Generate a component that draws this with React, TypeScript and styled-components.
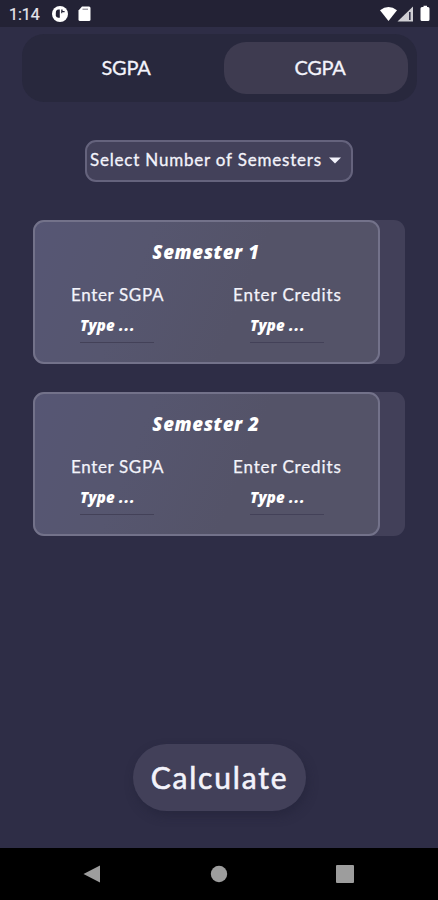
import React from "react";
import styled, { createGlobalStyle } from "styled-components";

const GlobalStyle = createGlobalStyle`
  * { box-sizing: border-box; }
  body { margin: 0; background: #2e2d46; }
`;

const Screen = styled.div`
  width: 438px;
  height: 900px;
  display: flex;
  flex-direction: column;
  overflow: hidden;
  background: #2e2d46;
  color: #f3f3fb;
  font-family: Lato, "Open Sans", sans-serif;
`;

const StatusBar = styled.header`
  height: 27px;
  flex: none;
  display: flex;
  align-items: center;
  justify-content: space-between;
  padding: 1px 7px 0 9px;
  background: #232235;
`;

const StatusGroup = styled.div`
  display: flex;
  align-items: center;
  height: 27px;
`;

const Clock = styled.time`
  width: 42px;
  font: 400 16px/27px Roboto, sans-serif;
  color: #e6e6ec;
  -webkit-text-stroke: 0.2px;
`;

const Main = styled.main`
  flex: 1;
  display: flex;
  flex-direction: column;
  align-items: center;
`;

const Tabs = styled.nav`
  width: 395px;
  height: 68px;
  margin: 7px 0 0 1px;
  padding: 8px 9px;
  display: flex;
  justify-content: space-between;
  border-radius: 22px;
  background: #28283d;
`;

const Tab = styled.button<{ $active?: boolean }>`
  width: 184px;
  height: 52px;
  padding: 0 0 2px ${(p) => (p.$active ? 8 : 6)}px;
  border: 0;
  border-radius: 22px;
  background: ${(p) => (p.$active ? "#3e3b50" : "transparent")};
  color: inherit;
  font: 400 20px/24px Lato, sans-serif;
  letter-spacing: -0.25px;
  -webkit-text-stroke: 0.3px;
`;

const Select = styled.button`
  width: 268px;
  height: 42px;
  margin: 38px 0 0;
  padding: 0 10px 3px 3px;
  display: flex;
  align-items: center;
  justify-content: space-between;
  border: 2px solid #65637d;
  border-radius: 11px;
  background: #43415a;
  color: inherit;
  font: 400 17px/22px Lato, sans-serif;
  letter-spacing: 0.8px;
  -webkit-text-stroke: 0.3px;
  white-space: nowrap;

  svg { margin-top: 2px; }
`;

const SemesterList = styled.section`
  margin-top: 38px;
  display: flex;
  flex-direction: column;
  gap: 28px;
`;

const CardBack = styled.div`
  width: 372px;
  height: 144px;
  border-radius: 11px;
  background: #424059;
`;

const Card = styled.article`
  width: 347px;
  height: 144px;
  padding-top: 17px;
  border: 2px solid #73728a;
  border-radius: 11px;
  background: linear-gradient(112deg, #565674 0%, #56566f 30%, #545368 60%);
`;

const CardTitle = styled.h2`
  height: 26px;
  margin: 0;
  padding-right: 1px;
  color: #fff;
  text-align: center;
  font: italic 800 18.5px/25px "Open Sans", sans-serif;
  letter-spacing: 0.65px;
`;

const Fields = styled.div`
  display: flex;
  margin-top: 18px;
  padding-left: 36px;
`;

const Field = styled.label<{ $credits?: boolean }>`
  width: ${(p) => (p.$credits ? 120 : 162)}px;
  display: block;
`;

const FieldLabel = styled.span<{ $credits?: boolean }>`
  display: block;
  height: 22px;
  font: 400 17px/23px Lato, sans-serif;
  letter-spacing: ${(p) => (p.$credits ? 0.87 : 0.64)}px;
  -webkit-text-stroke: 0.25px;
  white-space: nowrap;
`;

const Entry = styled.span<{ $credits?: boolean }>`
  width: 74px;
  height: 29px;
  margin: 9px 0 0 ${(p) => (p.$credits ? 17 : 9)}px;
  display: block;
  border-bottom: 1px solid #434158;
  color: #fff;
  font: italic 800 15px/23px "Open Sans", sans-serif;
  letter-spacing: 0.15px;
`;

const Dots = styled.span`
  letter-spacing: 1px;
`;

const Calculate = styled.button`
  width: 173px;
  height: 67px;
  margin-top: auto;
  margin-bottom: 37px;
  padding: 0 0 2px 1px;
  border: 0;
  border-radius: 34px;
  background: #424059;
  box-shadow: 2px 5px 10px #22213780;
  color: inherit;
  font: 400 30px/36px Lato, sans-serif;
  letter-spacing: 1.8px;
  -webkit-text-stroke: 0.6px;
`;

const NavBar = styled.footer`
  height: 52px;
  flex: none;
  display: flex;
  align-items: center;
  justify-content: space-between;
  padding: 0 84px 0 83px;
  background: #000;
`;

function Semester({ number }: { number: number }) {
  return (
    <CardBack>
      <Card>
        <CardTitle>Semester {number}</CardTitle>
        <Fields>
          <Field>
            <FieldLabel>Enter SGPA</FieldLabel>
            <Entry>Type <Dots>...</Dots></Entry>
          </Field>
          <Field $credits>
            <FieldLabel $credits>Enter Credits</FieldLabel>
            <Entry $credits>Type <Dots>...</Dots></Entry>
          </Field>
        </Fields>
      </Card>
    </CardBack>
  );
}

export default function App() {
  return (
    <Screen>
      <GlobalStyle />
      <StatusBar>
        <StatusGroup>
          <Clock>1:14</Clock>
          <svg width="40" height="18" viewBox="0 0 40 18">
            <circle cx="9" cy="9" r="8" fill="#fff" />
            <path d="M7.5 4.5Q4.8 4.9 4.8 8v2.3q0 2 2.4 2.5h1.6V4.5Z" fill="#232235" />
            <path d="M10.2 4.5v3.7h1V7.3h2.4V6.1h-2V4.5Z" fill="#232235" />
            <path d="M31 1.5h7A1.5 1.5 0 0 1 39.5 3v11.5A1.5 1.5 0 0 1 38 16h-9a1.5 1.5 0 0 1-1.5-1.5V5.5Z" fill="#fff" />
            <path d="M31.5 4.2h5.5" stroke="#777681" />
          </svg>
        </StatusGroup>
        <StatusGroup>
          <svg width="52" height="18" viewBox="0 0 52 18">
            <path d="M1 5.2Q9.5-1.2 18 5.2L9.5 16Z" fill="#fff" />
            <path d="M34 1.5v15H18.5Z" fill="#d0cfd4" />
            <path d="M30.8 7v8" stroke="#34334a" strokeWidth="1.6" />
            <path d="M43 2h1.5V.7h3.5V2h1a1.5 1.5 0 0 1 1.5 1.5v11A1.5 1.5 0 0 1 49 16h-6a1.5 1.5 0 0 1-1.5-1.5v-11A1.5 1.5 0 0 1 43 2Z" fill="#fff" />
          </svg>
        </StatusGroup>
      </StatusBar>
      <Main>
        <Tabs>
          <Tab>SGPA</Tab>
          <Tab $active>CGPA</Tab>
        </Tabs>
        <Select>
          Select Number of Semesters
          <svg width="12" height="7" viewBox="0 0 12 7">
            <path d="M0 .5h12L6 6.5Z" fill="#f3f3fb" />
          </svg>
        </Select>
        <SemesterList>
          <Semester number={1} />
          <Semester number={2} />
        </SemesterList>
        <Calculate>Calculate</Calculate>
      </Main>
      <NavBar>
        <svg width="18" height="18" viewBox="0 0 18 18">
          <path d="M17 .5v17L.5 9Z" fill="#9d9d9d" />
        </svg>
        <svg width="18" height="18" viewBox="0 0 18 18">
          <circle cx="9" cy="9" r="8.2" fill="#9d9d9d" />
        </svg>
        <svg width="18" height="18" viewBox="0 0 18 18">
          <rect width="18" height="18" rx="1" fill="#9d9d9d" />
        </svg>
      </NavBar>
    </Screen>
  );
}
